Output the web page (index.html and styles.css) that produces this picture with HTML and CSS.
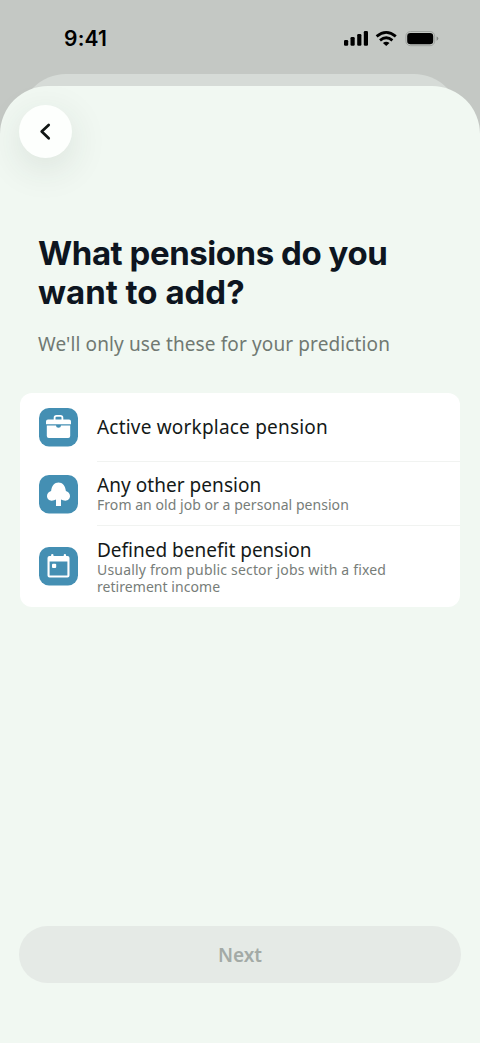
FILE: index.html
```html
<!DOCTYPE html>
<html lang="en">
<head>
<meta charset="utf-8">
<meta name="viewport" content="width=device-width, initial-scale=1">
<title>Add pensions</title>
<link rel="stylesheet" href="styles.css">
</head>
<body>
<div class="screen">
  <header class="status">
    <span class="time">9:41</span>
    <svg class="indicators" width="96" height="18" viewBox="0 0 96 18">
      <g fill="#000">
        <rect x="0" y="11" width="4.2" height="5.8" rx="1.2"/>
        <rect x="6.5" y="8" width="4.2" height="8.800" rx="1.2"/>
        <rect x="13.200" y="5" width="4.200" height="11.800" rx="1.2"/>
        <rect x="19.800" y="2" width="4.200" height="14.800" rx="1.2"/>
        <path d="M42.200 17 38.900 13.900Q42.200 11.400 45.500 13.900Z"/>
      </g>
      <path d="M32.600 7.400Q42.200-.6 51.800 7.400M36 11.300Q42.200 6.300 48.400 11.300" fill="none" stroke="#000" stroke-width="2.800"/>
      <rect x="61.900" y="2.500" width="28.800" height="14.200" rx="4.600" fill="none" stroke="#a0a4a0"/>
      <rect x="63.200" y="4.100" width="26" height="11.200" rx="3.300" fill="#000"/>
      <path d="M92.600 7.500q1.700.5 1.700 2.100t-1.700 2.100Z" fill="#858985"/>
    </svg>
  </header>
  <div class="back-sheet"></div>
  <main class="sheet">
    <button class="back" aria-label="Back">
      <svg width="20" height="20" viewBox="0 0 20 20"><path d="M12.700 3 5.700 9.600l7 6.700" fill="none" stroke="#101614" stroke-width="2.700" stroke-linecap="round" stroke-linejoin="round"/></svg>
    </button>
    <h1 class="title"><span class="title-a">What pensions do you</span><br><span class="title-b">want to add?</span></h1>
    <p class="lead">We'll only use these for your prediction</p>
    <ul class="list">
      <li class="row row-one">
        <svg class="icon" width="39" height="39" viewBox="0 0 39 39">
          <rect width="39" height="38.500" rx="10" fill="#448fb3"/>
          <path d="M15.600 12v-2.200q0-1.900 1.900-1.900h4q1.900 0 1.900 1.900V12" fill="none" stroke="#fff" stroke-width="1.800"/>
          <path d="M9 11.600h21q2 0 2 2v2.700H7v-2.700q0-2 2-2ZM7.800 17.500h9.300v.6q0 1.600 2.400 1.600t2.400-1.600v-.6h9.300V28q0 2-2 2H9.800q-2 0-2-2Z" fill="#fff"/>
        </svg>
        <div class="text"><span class="name name-a">Active workplace pension</span></div>
      </li>
      <li class="row row-two">
        <svg class="icon" width="39" height="39" viewBox="0 0 39 39">
          <rect width="39" height="38.500" rx="10" fill="#448fb3"/>
          <path d="M17 31v-6.400q-1.800 1.100-4.300 1.100C10 25.700 8 23.600 8 21c0-2.600 1.900-4.500 4.100-5 .5-5.400 3.400-8.600 7.400-8.600s6.900 3.200 7.400 8.600c2.200.5 4.100 2.400 4.100 5 0 2.600-2 4.700-4.700 4.700q-2.500 0-4.300-1.100V31Z" fill="#fff"/>
        </svg>
        <div class="text"><span class="name name-b">Any other pension</span><span class="note note-a">From an old job or a personal pension</span></div>
      </li>
      <li class="row row-three">
        <svg class="icon" width="39" height="39" viewBox="0 0 39 39">
          <rect width="39" height="38.500" rx="10" fill="#448fb3"/>
          <path d="M10.500 9h18q2 0 2 2v17.500q0 2-2 2h-18q-2 0-2-2V11q0-2 2-2ZM10.600 14.400v14h17.800v-14Z" fill="#fff" fill-rule="evenodd"/>
          <path d="M13.300 8.300v3M25.900 8.300v3" stroke="#fff" stroke-width="2.400" stroke-linecap="round"/>
          <rect x="13" y="16.800" width="4.200" height="4.200" rx="1" fill="#fff"/>
        </svg>
        <div class="text"><span class="name name-c">Defined benefit pension</span><span class="note"><span class="note-b">Usually from public sector jobs with a fixed</span><br><span class="note-c">retirement income</span></span></div>
      </li>
    </ul>
    <button class="next" disabled>Next</button>
  </main>
</div>
</body>
</html>
```
FILE: styles.css
```css
* { box-sizing: border-box; }
body { margin: 0; background: #c4c8c4; font-family: "Noto Sans", sans-serif; }
.screen { height: 1043px; display: flex; flex-direction: column; overflow: hidden; background: #c4c8c4; }
.status { height: 74px; padding: 26px 40px 0 64px; display: flex; justify-content: space-between; align-items: flex-start; flex: none; }
.time { font: 600 21px/25px Inter, sans-serif; letter-spacing: 0.2px; color: #000; }
.indicators { margin-top: 3px; }
.back-sheet { height: 46px; flex: none; margin: 0 20px -34px; background: #d6dbd7; border-radius: 46px 46px 0 0; }
.sheet { flex: 1; padding: 19px 19px 60px; display: flex; flex-direction: column; align-items: flex-start; background: #f1f8f2; border-radius: 48px 48px 0 0; }
.back { width: 53px; height: 53px; padding: 0; border: 0; border-radius: 50%; flex: none; display: grid; place-items: center; background: #fdfffd; box-shadow: 0 10px 38px rgba(40, 60, 50, .12); }
.title { margin: 76px 0 0 19px; font: 700 33px/39px Inter, sans-serif; color: #0d1520; white-space: nowrap; }
.title-a { letter-spacing: -0.45px; }
.lead { margin: 17px 0 0 19px; font-size: 19px; line-height: 30px; letter-spacing: 0.12px; color: #707972; white-space: nowrap; }
.list { width: 440px; height: 214px; margin: 34px 0 0 1px; padding: 0; list-style: none; border-radius: 12px; background: #fff; flex: none; white-space: nowrap; }
.row { display: flex; align-items: center; padding-left: 19px; gap: 19px; }
.row-one { height: 69px; }
.row-two { height: 64px; }
.row-three { height: 81px; }
.icon { flex: none; }
.text { flex: 1; height: 100%; display: flex; flex-direction: column; justify-content: center; }
.row-one .text, .row-two .text { border-bottom: 1px solid #f1f3f1; }
.name { font-size: 19px; line-height: 24px; color: #141918; }
.name-a { letter-spacing: 0.2px; }
.name-b { letter-spacing: 0.05px; }
.note { margin: -1px 0 1px; font-size: 14px; line-height: 17px; color: #777d79; }
.note-a, .note-c { letter-spacing: 0.05px; }
.note-b { letter-spacing: 0.18px; }
.next { width: 442px; height: 57px; margin-top: auto; padding: 0; border: 0; border-radius: 29px; flex: none; background: #e5eae6; color: #a3aaa6; font: 600 19px/26px "Noto Sans", sans-serif; }
```
